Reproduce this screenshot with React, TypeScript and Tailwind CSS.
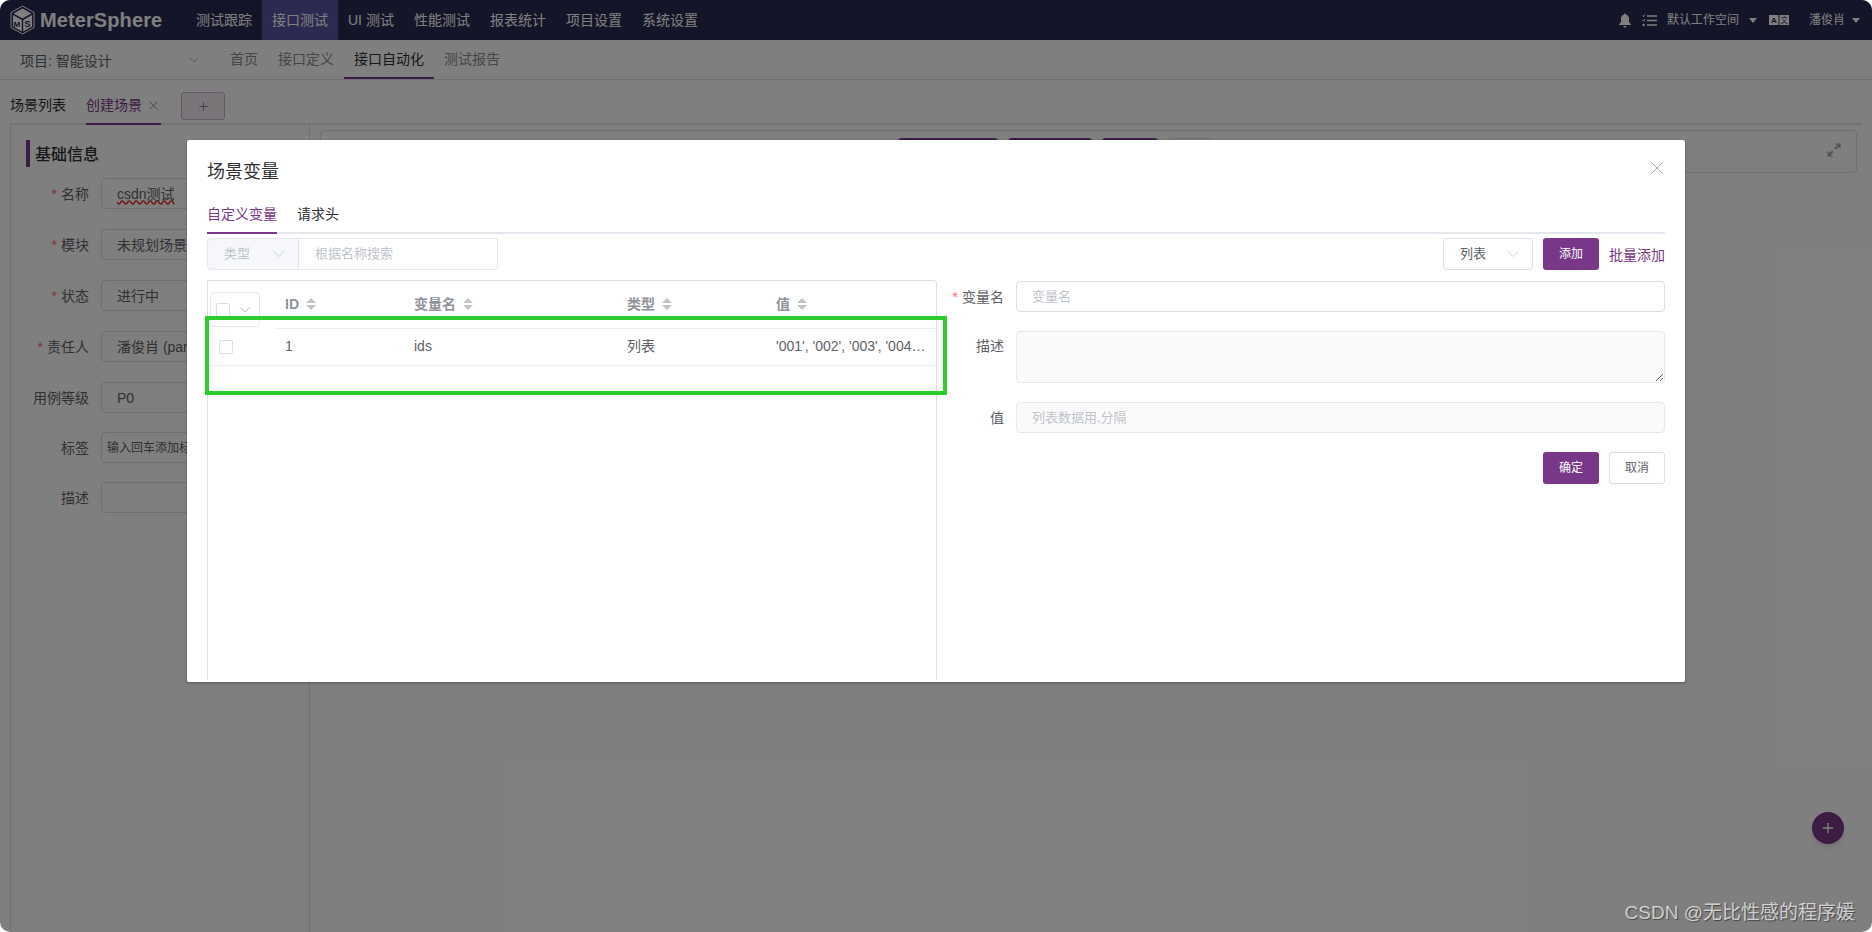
import React from "react";
import { ChevronDown, X, Plus } from "lucide-react";

const Caret = () => (
  <svg width="12" height="14" viewBox="0 0 12 14" className="shrink-0">
    <path d="M6 1 L11 6 H1 Z M6 13 L11 8 H1 Z" fill="#c0c4cc" />
  </svg>
);

const TriDown = ({ className = "" }: { className?: string }) => (
  <svg width="8" height="5" viewBox="0 0 8 5" className={className}>
    <path d="M0 0 H8 L4 5 Z" fill="#ffffff" />
  </svg>
);

const Logo = () => (
  <svg width="25" height="30" viewBox="0 0 25 30" className="shrink-0">
    <path d="M12.5 1 L24 7.5 V22.5 L12.5 29 L1 22.5 V7.5 Z" fill="none" stroke="#ffffff" strokeWidth="1" />
    <path d="M12.5 3.5 L21.5 8.5 L12.5 13.5 L3.5 8.5 Z" fill="#ffffff" />
    <path d="M3 10 L11.8 15 V26.5 L3 21.5 Z" fill="#ffffff" />
    <path d="M22 10 L13.2 15 V26.5 L22 21.5 Z" fill="#ffffff" />
    <text x="3.6" y="21.5" fontSize="8" fontWeight="700" fill="#2a2a55" fontFamily="Liberation Sans">M</text>
    <text x="14.6" y="22" fontSize="9" fontWeight="700" fill="#2a2a55" fontFamily="Liberation Sans">S</text>
  </svg>
);

const menu = ["测试跟踪", "接口测试", "UI 测试", "性能测试", "报表统计", "项目设置", "系统设置"];

const TopBar = () => (
  <div className="flex h-10 items-center bg-[#2a2a55] text-white">
    <div className="flex w-[186px] items-center pl-[10px]">
      <Logo />
      <span className="ml-[5px] text-[20px] font-bold tracking-[0.1px]">MeterSphere</span>
    </div>
    <div className="flex h-full">
      {menu.map((m, i) => (
        <div key={m} className={`flex h-full items-center px-[10px] text-sm ${i === 1 ? "bg-[#5a54a4]" : ""}`}>{m}</div>
      ))}
    </div>
    <div className="ml-auto flex items-center pr-[12px] text-xs">
      <svg width="14" height="15" viewBox="0 0 14 15" fill="#ffffff">
        <path d="M7 0.5 C7.7 0.5 8 1 8 1.6 C10.2 2.2 11 4 11 6 V9 L13 11.5 V12 H1 V11.5 L3 9 V6 C3 4 3.8 2.2 6 1.6 C6 1 6.3 0.5 7 0.5 Z M5.5 13 H8.5 C8.5 14 7.8 14.6 7 14.6 C6.2 14.6 5.5 14 5.5 13 Z" />
      </svg>
      <svg width="15" height="13" viewBox="0 0 15 13" className="ml-[10px]" fill="none" stroke="#ffffff">
        <path d="M5 2 H15 M5 6.5 H15 M5 11 H15" strokeWidth="1.5" />
        <path d="M0.5 1.5 L1.5 2.7 L3 0.5 M0.5 6 L1.5 7.2 L3 5" strokeWidth="1" />
        <circle cx="1.7" cy="11" r="1.2" fill="#ffffff" stroke="none" />
      </svg>
      <span className="ml-[10px]">默认工作空间</span>
      <TriDown className="ml-[10px]" />
      <svg width="20" height="10" viewBox="0 0 20 10" className="ml-[12px]">
        <rect x="0" y="0" width="9.5" height="10" fill="#ffffff" />
        <rect x="10.5" y="0" width="9.5" height="10" fill="#ffffff" />
        <text x="2" y="8" fontSize="8" fontWeight="700" fill="#2a2a55" fontFamily="Liberation Sans">A</text>
        <text x="11.5" y="8" fontSize="7.5" fill="#2a2a55" fontFamily="Noto Sans CJK SC">文</text>
      </svg>
      <span className="ml-[20px]">潘俊肖</span>
      <TriDown className="ml-[7px]" />
    </div>
  </div>
);

const SubNav = () => (
  <div className="flex h-10 border-b border-[#dcdfe6] bg-white text-sm text-[#8a8c90]">
    <div className="flex w-[220px] items-center pl-[20px] pr-[18px]">
      <span className="mt-[2px] text-[#606266]">项目: 智能设计</span>
      <ChevronDown size={16} strokeWidth={1} className="ml-auto text-[#909399]" />
    </div>
    <div className="flex h-full items-center">
      <div className="flex h-full w-[48px] items-center px-[10px]"><span className="-mt-[1px]">首页</span></div>
      <div className="flex h-full items-center px-[10px]"><span className="-mt-[1px]">接口定义</span></div>
      <div className="flex h-full items-center border-b-2 border-[#783887] px-[10px] text-[#303133]"><span className="mt-[1px]">接口自动化</span></div>
      <div className="flex h-full items-center px-[10px]"><span className="-mt-[1px]">测试报告</span></div>
    </div>
  </div>
);

const Tabs = () => (
  <div className="mx-[10px] flex h-[45px] items-end border-b-2 border-[#e4e7ed] text-sm">
    <div className="mb-[-2px] flex h-[33px] items-center pb-[7px] text-[#303133]">场景列表</div>
    <div className="mb-[-2px] ml-5 flex h-[33px] w-[75px] items-center border-b-2 border-[#783887] pb-[5px] text-[#783887]">
      创建场景
      <X size={15} strokeWidth={1} className="ml-[4px] shrink-0 text-[#606266]" />
    </div>
    <div className="mb-[3px] ml-5 flex h-[28px] w-[44px] items-center justify-center rounded-[3px] border border-[#c9afcf] bg-[#f2ebf3] text-[#783887]">
      <Plus size={13} strokeWidth={1.2} />
    </div>
  </div>
);

const Field = ({ label, req, className = "", children }: { label: string; req?: boolean; className?: string; children: React.ReactNode }) => (
  <div className={`flex h-[31px] items-center ${className}`}>
    <div className="flex w-[63px] justify-end text-sm text-[#606266]">
      {req && <span className="mr-1 text-[#f56c6c]">*</span>}
      {label}
    </div>
    <div className="ml-3 flex h-full w-[190px] items-center overflow-hidden whitespace-nowrap rounded border border-[#dcdfe6] bg-white px-[15px] text-sm text-[#606266]">
      {children}
    </div>
  </div>
);

const LeftPanel = () => (
  <div className="ml-[10px] w-[300px] shrink-0 border-x border-[#dcdfe6] pl-[15px] pt-[15px]">
    <div className="flex h-[27px] items-center border-l-4 border-[#783887] pl-[5px] pt-[2px] text-[16px] font-medium text-[#303133]">基础信息</div>
    <div className="mt-[11px] flex flex-col gap-5">
      <Field label="名称" req><span className="underline decoration-[#dc2626] decoration-wavy">csdn测试</span></Field>
      <Field label="模块" req>未规划场景</Field>
      <Field label="状态" req>进行中</Field>
      <Field label="责任人" req>潘俊肖 (pan)</Field>
      <Field label="用例等级">P0</Field>
      <Field label="标签" className="-mt-[1px]"><span className="-ml-[10px] text-xs">输入回车添加标签</span></Field>
      <Field label="描述" className="-mt-[1px]">{""}</Field>
    </div>
  </div>
);

const RightPanel = () => (
  <div className="flex min-w-0 flex-1 flex-col pl-[10px] pr-[15px] pt-[5px]">
    <div className="flex h-[43px] rounded border border-[#dcdfe6] bg-white pt-[7px]">
      <div className="ml-[577px] flex gap-[10px]">
        <div className="h-[32px] w-[100px] rounded bg-[#783887]" />
        <div className="h-[32px] w-[84px] rounded bg-[#783887]" />
        <div className="h-[32px] w-[56px] rounded bg-[#783887]" />
        <div className="h-[32px] w-[44px] rounded border border-[#dcdfe6]" />
      </div>
      <svg width="14" height="14" viewBox="0 0 14 14" className="ml-auto mr-[15px] mt-[5px]" fill="#a8a8b4">
        <path d="M8 0.5 H13.5 V6 L11.5 4 L9 6.5 L7.5 5 L10 2.5 Z" />
        <path d="M6 13.5 H0.5 V8 L2.5 10 L5 7.5 L6.5 9 L4 11.5 Z" />
      </svg>
    </div>
    <div className="relative flex-1">
      <div className="absolute bottom-[88px] right-[13px] flex h-8 w-8 items-center justify-center rounded-full bg-[#783887] text-white shadow-md">
        <Plus size={16} strokeWidth={2} />
      </div>
    </div>
  </div>
);

const cols = "grid grid-cols-[67px_129px_213px_149px_1fr]";

const Head = ({ t }: { t: string }) => (
  <div className="flex h-[48px] items-center gap-[6px] border-b border-[#ebeef5] pb-[2px] pl-[10px] text-sm font-bold text-[#909399]">
    {t}
    <Caret />
  </div>
);

const Cell = ({ children }: { children: React.ReactNode }) => (
  <div className="flex h-[37px] items-center whitespace-nowrap border-b border-[#ebeef5] pb-[2px] pl-[10px] text-sm text-[#606266]">{children}</div>
);

const Check = () => <div className="h-[14px] w-[14px] shrink-0 rounded-[2px] border border-[#dcdfe6] bg-white" />;

const TableCard = () => (
  <div className="h-[400px] w-[730px] shrink-0 rounded-tr border-x border-t border-[#dcdfe6]">
    <div className={cols}>
      <div className="flex h-[48px] items-start pl-[2px] pt-[11px]">
        <div className="flex h-[35px] w-[50px] items-center rounded border border-[#e4e7ed] bg-white pl-[5px]">
          <Check />
          <ChevronDown size={18} strokeWidth={0.9} className="ml-[6px] shrink-0 text-[#909399]" />
        </div>
      </div>
      <Head t="ID" />
      <Head t="变量名" />
      <Head t="类型" />
      <Head t="值" />
      <div className="flex h-[37px] items-center border-b border-[#ebeef5] pl-[11px]"><Check /></div>
      <Cell>1</Cell>
      <Cell>ids</Cell>
      <Cell>列表</Cell>
      <Cell>'001', '002', '003', '004…</Cell>
    </div>
  </div>
);

const Label = ({ t, req }: { t: string; req?: boolean }) => (
  <div className="flex w-[67px] shrink-0 items-center justify-end text-sm text-[#606266]">
    {req && <span className="mr-1 text-[#f56c6c]">*</span>}
    {t}
  </div>
);

const VarForm = () => (
  <div className="flex min-w-0 flex-1 flex-col gap-[19px] pt-[1px]">
    <div className="flex h-[31px] gap-3">
      <Label t="变量名" req />
      <input readOnly placeholder="变量名" className="min-w-0 flex-1 rounded border border-[#dcdfe6] bg-white px-[15px] text-[13px] outline-none placeholder:text-[#c0c4cc]" />
    </div>
    <div className="flex h-[52px] gap-3">
      <div className="flex w-[67px] shrink-0 justify-end pt-[5px] text-sm text-[#606266]">描述</div>
      <textarea readOnly className="min-w-0 flex-1 rounded border border-[#e4e7ed] bg-[#fafafa] outline-none" />
    </div>
    <div className="flex h-[31px] gap-3">
      <Label t="值" />
      <input readOnly placeholder="列表数据用,分隔" className="min-w-0 flex-1 rounded border border-[#e4e7ed] bg-[#fafafa] px-[15px] text-[13px] outline-none placeholder:text-[#c0c4cc]" />
    </div>
    <div className="flex h-[32px] justify-end gap-[10px]">
      <div className="flex w-[56px] items-center justify-center rounded-[3px] bg-[#783887] text-xs text-white">确定</div>
      <div className="flex w-[56px] items-center justify-center rounded-[3px] border border-[#dcdfe6] bg-white text-xs text-[#606266]">取消</div>
    </div>
  </div>
);

const Modal = () => (
  <div className="absolute left-[187px] top-[140px] h-[542px] w-[1498px] overflow-hidden rounded-[2px] bg-white px-5 pt-5 shadow-[0_1px_3px_rgba(0,0,0,0.3)]">
    <div className="text-[18px] leading-6 text-[#303133]">场景变量</div>
    <X size={22} strokeWidth={0.9} className="absolute right-[17px] top-[17px] text-[#909399]" />
    <div className="mt-5 flex h-[30px] border-b-2 border-[#e4e7ed] text-sm">
      <div className="-mb-[2px] h-[30px] border-b-2 border-[#783887] text-[#783887]">自定义变量</div>
      <div className="ml-5 text-[#303133]">请求头</div>
    </div>
    <div className="mt-1 flex h-8 items-center">
      <div className="flex h-full w-[92px] items-center rounded-l border border-[#e4e7ed] bg-[#f5f7fa] pl-4 pr-[9px] text-[13px] text-[#c0c4cc]">
        类型
        <ChevronDown size={20} strokeWidth={0.9} className="ml-auto shrink-0" />
      </div>
      <div className="flex h-full w-[199px] items-center rounded-r border-y border-r border-[#e4e7ed] pl-4 text-[13px] text-[#c0c4cc]">根据名称搜索</div>
      <div className="ml-auto flex h-full w-[90px] items-center rounded border border-[#dcdfe6] pl-4 pr-[9px] text-[13px] text-[#606266]">
        列表
        <ChevronDown size={20} strokeWidth={0.9} className="ml-auto shrink-0 text-[#c0c4cc]" />
      </div>
      <div className="ml-[10px] flex h-full w-[56px] items-center justify-center rounded-[3px] bg-[#783887] text-xs text-white">添加</div>
      <div className="ml-[10px] mt-[2px] text-[14px] text-[#783887]">批量添加</div>
    </div>
    <div className="mt-[10px] flex">
      <TableCard />
      <VarForm />
    </div>
    <div className="absolute left-[18px] top-[176px] h-[79px] w-[742px] border-4 border-[#2ecb2e]" />
  </div>
);

export default function App() {
  return (
    <div className="h-[932px] overflow-hidden bg-white font-['Liberation_Sans','Noto_Sans_CJK_SC',sans-serif]">
      <div className="relative h-full overflow-hidden rounded-[10px]">
        <div className="flex h-full flex-col">
          <TopBar />
          <SubNav />
          <Tabs />
          <div className="flex min-h-0 flex-1">
            <LeftPanel />
            <RightPanel />
          </div>
        </div>
        <div className="absolute inset-0 bg-black/50" />
        <Modal />
        <div className="absolute bottom-[7px] right-[17px] text-[19px] leading-6 text-white/70 [text-shadow:1px_1px_1px_rgba(0,0,0,0.45)]">CSDN @无比性感的程序媛</div>
      </div>
    </div>
  );
}
